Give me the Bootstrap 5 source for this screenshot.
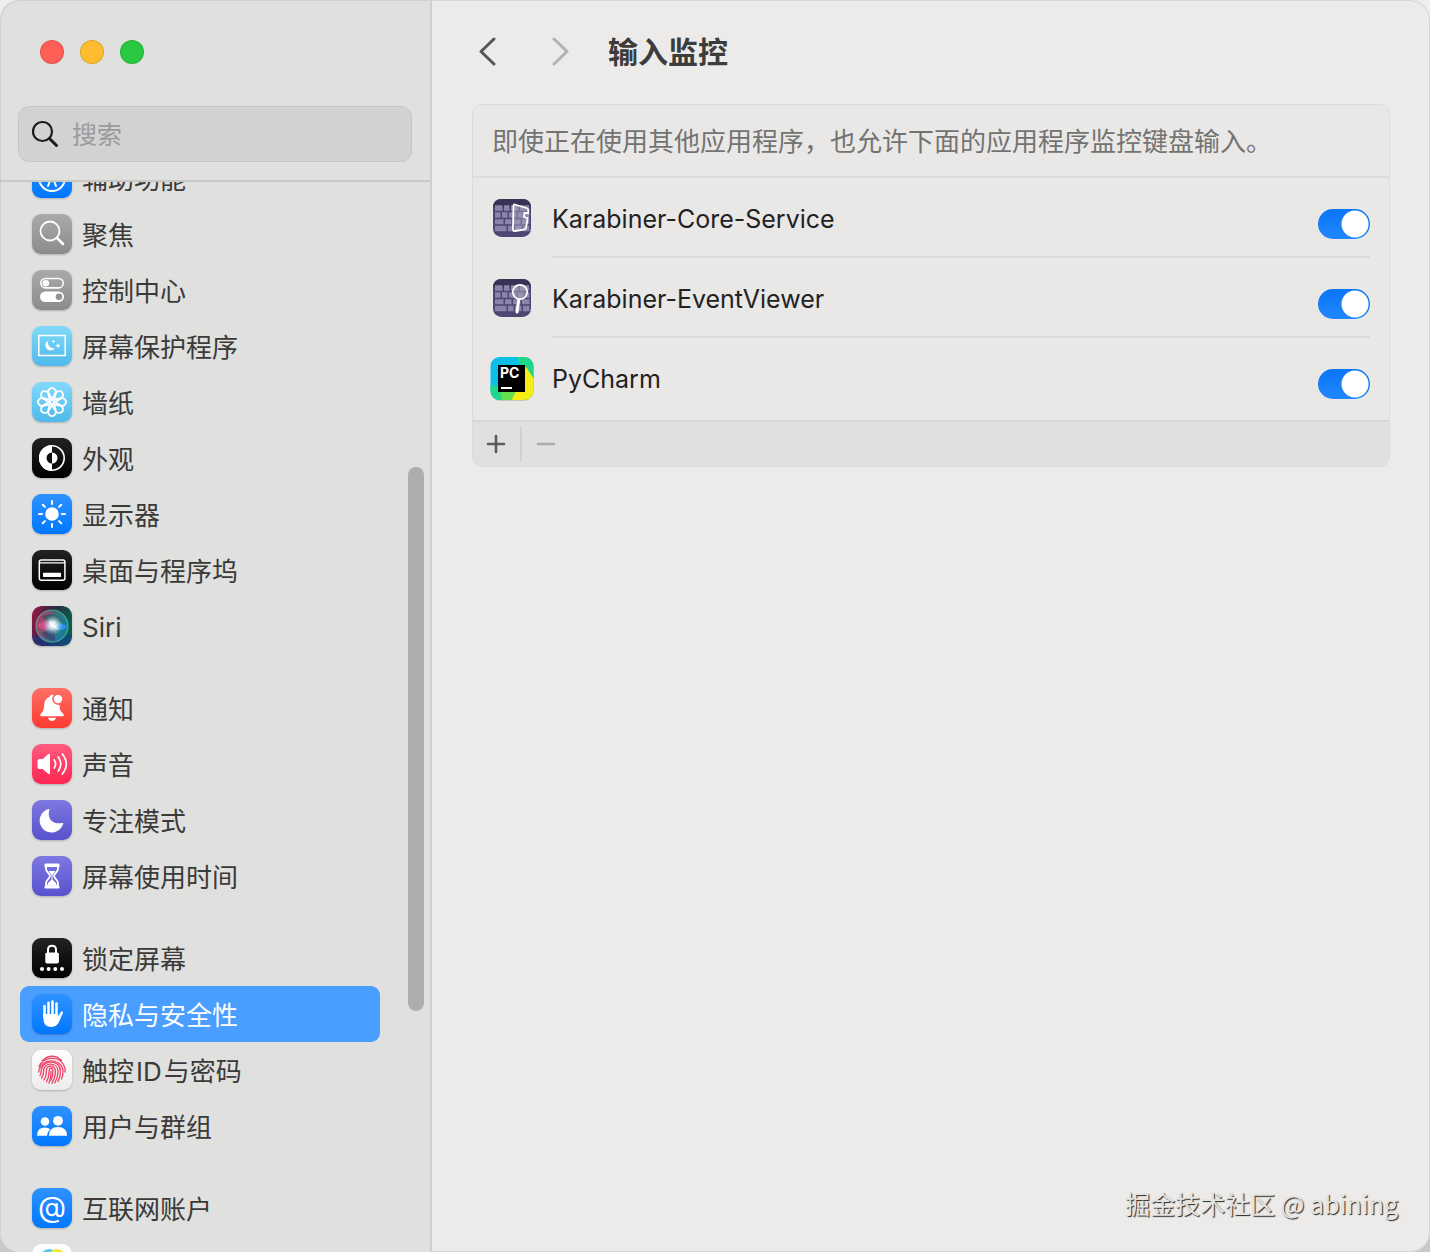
<!DOCTYPE html>
<html lang="zh-CN">
<head>
<meta charset="utf-8">
<meta name="viewport" content="width=device-width, initial-scale=1">
<title>输入监控</title>
<link href="https://cdn.jsdelivr.net/npm/bootstrap@5.3.0/dist/css/bootstrap.min.css" rel="stylesheet">
<style>
body{font-family:Inter,"Noto Sans CJK SC",sans-serif;font-size:26px;line-height:40px;background:linear-gradient(#eeeeee,#c8c8c8);color:#222}
.window{background:#ecebea;border-radius:20px;box-shadow:inset 0 0 0 1px #d6d6d5}
.sidebar{width:432px;background:#e0e0de;border-right:2px solid #cfcfcd;box-shadow:inset 1px 1px 0 #d0d0cf;border-radius:20px 0 0 20px;color:#3a3a39}
.side-top{padding:40px 18px 18px;border-bottom:2px solid #c8c8c6}
.lights{padding-left:22px;gap:16px;margin-bottom:42px}
.light{width:24px;height:24px;border-radius:50%;border:1px solid rgba(0,0,0,.12);padding:0}
.light-r{background:#ff5f57}.light-y{background:#febc2e}.light-g{background:#28c840}
.search{height:56px;background:#d2d2d2;border:1px solid #c6c6c6;border-radius:11px;padding-left:12px;gap:13px}
.search input,.search input:focus{font-size:25px;line-height:38px;background:transparent;border:0;padding:2px 0 0;box-shadow:none}
.search input::placeholder{color:#9b9b9b;opacity:1}
.side-list{margin-top:-32px;padding-left:20px;padding-right:50px}
.side-list .nav-link{height:56px;padding:4px 12px 0;gap:10px;border-radius:9px;color:inherit;white-space:nowrap}
.side-list .nav-link.active{background:#4a9eff;color:#fff}
.side-list ul+ul{margin-top:26px}
.tile{width:40px;height:40px;margin-top:-4px;border-radius:9px;box-shadow:0 1px 2px rgba(0,0,0,.22);flex:none}
.latin{padding:0 2px}
.t-blue{background:linear-gradient(#2f92ff,#0077ff)}
.t-gray{background:linear-gradient(#aaaaad,#8b8b8e)}
.t-sky{background:linear-gradient(#82daf9,#50b9ec)}
.t-black{background:linear-gradient(#222,#000)}
.t-red{background:linear-gradient(#ff6f66,#ff3a30)}
.t-pink{background:linear-gradient(#ff5c80,#ff2552)}
.t-purple{background:linear-gradient(#7d78e2,#5852ce)}
.t-white{background:linear-gradient(#fff,#ececec)}
.thumb{right:6px;top:285px;width:16px;height:544px;border-radius:8px;background:#adadac}
.content-area{padding:0 40px}
.title-row{height:104px}
.title-row h1{font-size:30px;line-height:40px;font-weight:700;color:#3c3c3b;margin:0}
.nav-pair{gap:48px;margin-right:24px}
.chev{width:32px;height:40px;padding:0;border:0;background:none;line-height:0}
.panel{background:#e9e8e7;border:1px solid #dbdbda;border-radius:10px;overflow:hidden}
.note{color:#737372;padding:17px 19px 14px;border-bottom:2px solid #dcdcdb}
.app-row{height:80px;padding:0 19px 0 17px;gap:18px}
.app-body{height:80px;border-bottom:2px solid #dcdcdb;min-width:0}
.app-row:last-child{height:82px}
.app-row:last-child .app-body{border-color:transparent}
.app-name{font-size:25px;padding-top:4px}
.form-switch.sw{padding:0;margin:14px 0 0;min-height:0;line-height:0}
.form-switch .form-check-input{float:none;margin:0;width:52px;height:30px;border:0;border-radius:15px;background:#bbb}
.form-switch .form-check-input:checked{background:radial-gradient(circle at 37px 15px,#fff 12px,#fff 13px,transparent 14px),linear-gradient(#0a75f5,#1f87ff)}
.tools{border-top:2px solid #d6d6d5;background:#e1e0df;height:46px}
.tools button{width:47px;height:34px;border:0;background:none;padding:0 2px 0 0;line-height:0}
.tools button+button{border-left:2px solid #d0d0cf;padding:0;width:50px}
.mark-text{right:32px;bottom:29px;font-family:"Noto Sans CJK SC",sans-serif;font-size:25px;color:#e4e4e3;text-shadow:1px 1px 1px #222;white-space:nowrap}
</style>
<script src="https://cdn.jsdelivr.net/npm/bootstrap@5.3.0/dist/js/bootstrap.bundle.min.js"></script>
</head>
<body>
<div class="window d-flex vh-100 overflow-hidden position-relative">
<aside class="sidebar d-flex flex-column flex-shrink-0">
  <div class="side-top">
    <div class="lights d-flex">
      <button class="light light-r" aria-label="关闭"></button><button class="light light-y" aria-label="最小化"></button><button class="light light-g" aria-label="缩放"></button>
    </div>
    <label class="search d-flex align-items-center">
      <svg class="flex-shrink-0" width="28" height="28" viewBox="0 0 28 28" fill="none" stroke="#1c1c1c" stroke-linecap="round"><circle cx="11.500" cy="11.500" r="9.500" stroke-width="2.200"/><path d="M18.500 18.500l7 7" stroke-width="3"/></svg>
      <input class="form-control" type="search" placeholder="搜索" aria-label="搜索">
    </label>
  </div>
  <nav class="flex-grow-1 overflow-hidden position-relative">
    <div class="side-list">
    <ul class="nav flex-column flex-nowrap">
      <li><a class="nav-link d-flex align-items-center" href="#"><svg class="tile t-blue" viewBox="0 0 40 40" fill="none" stroke="#fff" stroke-width="2" stroke-linecap="round"><circle cx="20" cy="20" r="13"/><circle cx="20" cy="12.500" r="1.500" fill="#fff" stroke="none"/><path d="M13 16.500l5 1.200h4l5-1.200M18 18v5l-2 5M22 18v5l2 5M18 23l2-1 2 1"/></svg>辅助功能</a></li>
      <li><a class="nav-link d-flex align-items-center" href="#"><svg class="tile t-gray" viewBox="0 0 40 40" fill="none" stroke="#fff" stroke-linecap="round"><circle cx="18" cy="17" r="9.500" stroke-width="1.800"/><path d="M25 24l6 6" stroke-width="2.600"/></svg>聚焦</a></li>
      <li><a class="nav-link d-flex align-items-center" href="#"><svg class="tile t-gray" viewBox="0 0 40 40"><rect x="8.800" y="8.500" width="22.400" height="9.400" rx="4.700" fill="none" stroke="#fff" stroke-width="1.600"/><circle cx="13.800" cy="13.200" r="3.300" fill="#fff"/><rect x="8" y="21.500" width="24" height="10.500" rx="5.250" fill="#fff"/><circle cx="27" cy="26.700" r="3.300" fill="#939396"/></svg>控制中心</a></li>
      <li><a class="nav-link d-flex align-items-center" href="#"><svg class="tile t-sky" viewBox="0 0 40 40"><rect x="6.800" y="9.500" width="26.400" height="20" fill="none" stroke="#fff" stroke-width="1.500"/><path d="M16.500 14.500a5.200 5.200 0 1 0 6.500 7.500a5.500 5.500 0 0 1-6.500-7.500z" fill="#fff"/><path d="M21.500 13.500l.6 1.400 1.400.6-1.400.6-.6 1.400-.6-1.400-1.400-.6 1.400-.6zM26 17l.8 2 2 .8-2 .8-.8 2-.8-2-2-.8 2-.8z" fill="#fff"/></svg>屏幕保护程序</a></li>
      <li><a class="nav-link d-flex align-items-center" href="#"><svg class="tile t-sky" viewBox="0 0 40 40" fill="none" stroke="#fff" stroke-width="1.800"><g id="petal"><path d="M20 17l-2.800-4.800a3.700 3.700 0 1 1 5.600 0z"/><path d="M20 23l2.800 4.800a3.700 3.700 0 1 1-5.600 0z"/></g><use href="#petal" transform="rotate(45 20 20)"/><use href="#petal" transform="rotate(90 20 20)"/><use href="#petal" transform="rotate(135 20 20)"/><circle cx="20" cy="20" r="2"/></svg>墙纸</a></li>
      <li><a class="nav-link d-flex align-items-center" href="#"><svg class="tile t-black" viewBox="0 0 40 40"><circle cx="20" cy="20" r="12.200" fill="none" stroke="#fff" stroke-width="1.600"/><path d="M20 7a13 13 0 0 0 0 26z" fill="#fff"/><path d="M20 14.500a5.500 5.500 0 0 0 0 11z" fill="#111"/><path d="M20 14.500a5.500 5.500 0 0 1 0 11z" fill="#fff"/></svg>外观</a></li>
      <li><a class="nav-link d-flex align-items-center" href="#"><svg class="tile t-blue" viewBox="0 0 40 40"><circle cx="20" cy="20" r="6.800" fill="#fff"/><path d="M20 7v3M20 30v3M7 20h3M30 20h3M10.800 10.800l2.100 2.100M27.100 27.100l2.100 2.100M10.800 29.200l2.100-2.100M27.100 12.900l2.100-2.100" stroke="#fff" stroke-width="2" stroke-linecap="round"/></svg>显示器</a></li>
      <li><a class="nav-link d-flex align-items-center" href="#"><svg class="tile t-black" viewBox="0 0 40 40"><rect x="7.300" y="10" width="25.600" height="20.200" rx="2" fill="none" stroke="#fff" stroke-width="1.500"/><path d="M7.500 12.800h25" stroke="#fff" stroke-width="1.300"/><rect x="11" y="22.800" width="18" height="4.200" rx=".6" fill="#fff"/></svg>桌面与程序坞</a></li>
      <li><a class="nav-link d-flex align-items-center" href="#"><svg class="tile" viewBox="0 0 40 40"><defs><linearGradient id="siriBg" x2="1" y2=".3"><stop stop-color="#a3174a"/><stop offset=".5" stop-color="#2b2740"/><stop offset="1" stop-color="#0a5f4c"/></linearGradient><linearGradient id="siriOrb" x2="1" y2=".3"><stop stop-color="#e8356f"/><stop offset=".4" stop-color="#a06a8a"/><stop offset=".6" stop-color="#3d8f90"/><stop offset="1" stop-color="#1b8fc0"/></linearGradient><radialGradient id="siriGlow"><stop stop-color="#fff"/><stop offset=".35" stop-color="#edfaff" stop-opacity=".85"/><stop offset="1" stop-color="#a9d8ff" stop-opacity="0"/></radialGradient></defs><rect width="40" height="40" rx="9" fill="url(#siriBg)"/><path d="M0 30q20 3 40-2v3q0 9-9 9H9q-9 0-9-9z" fill="#1b3a90" opacity=".6"/><circle cx="20" cy="20" r="16" fill="url(#siriOrb)" opacity=".7" stroke="#5bd2a8" stroke-width="1.200"/><path d="M9 11q12-7 22 4l-9 3z" fill="#1f5354" opacity=".6"/><path d="M9 27q6 8 14 8l-1-12z" fill="#3b3a6b" opacity=".65"/><path d="M5 20q5-9 15-1-6 9-15 1z" fill="#f2508c" opacity=".6"/><path d="M21 20q8-4 14 0-4 8-14 0z" fill="#2f96f5" opacity=".85"/><circle cx="21" cy="19" r="10" fill="url(#siriGlow)"/><path d="M17 14l10 10-8-4z" fill="#fff"/></svg>Siri</a></li>
    </ul>
    <ul class="nav flex-column flex-nowrap">
      <li><a class="nav-link d-flex align-items-center" href="#"><svg class="tile t-red" viewBox="0 0 40 40" fill="#fff"><path d="M20 6.800c1.500 0 2.300.6 2.500 1.500a5.800 5.800 0 0 0 5 8.400c.2 4 .7 6.300 3 8.300 1 1 1.500 1.600 1.200 2.400-.2.600-.8.800-1.500.8H9.800c-.7 0-1.300-.2-1.500-.8-.3-.8.2-1.400 1.200-2.400 2.500-2.500 2.300-5 2.800-9 .4-4 2.400-6.300 5.500-7.200.2-1.200.9-2 2.200-2z"/><circle cx="26" cy="11" r="5" stroke="#ff6057" stroke-width="1.600"/><path d="M16 29.800h8c-.4 2-2 3.200-4 3.200s-3.600-1.200-4-3.200z"/></svg>通知</a></li>
      <li><a class="nav-link d-flex align-items-center" href="#"><svg class="tile t-pink" viewBox="0 0 40 40"><path d="M5.500 17q0-2 2-2h3.300l5-4.500Q18 9 18 11v18q0 2-2.200.5l-5-4.500H7.500q-2 0-2-2z" fill="#fff"/><path d="M22.300 16q2.500 4 0 8M26.300 13q5 7 0 14M30.300 10q8 10 0 20" fill="none" stroke="#fff" stroke-width="1.700" stroke-linecap="round"/></svg>声音</a></li>
      <li><a class="nav-link d-flex align-items-center" href="#"><svg class="tile t-purple" viewBox="0 0 40 40"><path d="M16.500 9c.8-.3 1.200.2.900 1-2.700 8.500 3.300 15 12.800 13 .9-.2 1.300.4.900 1.100A12 12 0 1 1 16.500 9z" fill="#fff"/></svg>专注模式</a></li>
      <li><a class="nav-link d-flex align-items-center" href="#"><svg class="tile t-purple" viewBox="0 0 40 40"><path d="M14 9.500h12v3.500c0 3-4 4.500-4 7s4 4 4 7v3.500H14V27c0-3 4-4.500 4-7s-4-4-4-7z" fill="none" stroke="#fff" stroke-width="1.800"/><path d="M12.500 8.500q0-1 1-1h13q1 0 1 1v2q0 .5-1 .5h-13q-1 0-1-.5zM12.500 30.500q0-.8 1-.8h13q1 0 1 .8v1q0 1-1 1h-13q-1 0-1-1zM16.500 15h7l-3 4v4.500l4 4v2h-9v-2l4-4V19z" fill="#fff"/></svg>屏幕使用时间</a></li>
    </ul>
    <ul class="nav flex-column flex-nowrap">
      <li><a class="nav-link d-flex align-items-center" href="#"><svg class="tile t-black" viewBox="0 0 40 40" fill="#fff"><rect x="13.300" y="14.500" width="13.600" height="11" rx="1.800"/><path d="M16 15v-3.300q0-3.900 4-3.900t4 3.900V15" fill="none" stroke="#fff" stroke-width="2"/><circle cx="10" cy="31" r="2"/><circle cx="16.600" cy="31" r="2"/><circle cx="23.300" cy="31" r="2"/><circle cx="30" cy="31" r="2"/></svg>锁定屏幕</a></li>
      <li><a class="nav-link active d-flex align-items-center" href="#" aria-current="page"><svg class="tile t-blue" viewBox="0 0 40 40" fill="none" stroke="#fff" stroke-width="2.500" stroke-linecap="round"><path d="M12.500 12v11M16.500 8.800V21M20.500 7.500V21M24.500 9.500V22"/><path d="M11.300 20h14.500v2.500l2.900-4.200q1.200-1.500 2-.6.600.6.100 1.600l-3.500 8q-2.300 5.700-7.800 5.700-8.200 0-8.200-9z" fill="#fff" stroke="none"/></svg>隐私与安全性</a></li>
      <li><a class="nav-link d-flex align-items-center" href="#"><svg class="tile t-white" viewBox="0 0 40 40" fill="none" stroke="#f0436a" stroke-width="1.350" stroke-linecap="round"><path d="M10.500 10.500Q20 2 29.500 10.500"/><path d="M7 16.500C11 6 29 5 33 18v4"/><path d="M6.800 22C8 7.500 30 7 31 21q.2 4-1.500 8"/><path d="M8 25.500q1.200-2 1.200-5C10 9.500 28 9 28.500 21q.2 5-2.500 10.500"/><path d="M9.500 28q2.300-3 2.200-7.500C12 12 25.500 12 26 21q.2 6-3.200 12"/><path d="M12 30q2.600-4 2.400-9C14.500 14.500 23 14.500 23.400 21q.1 6.500-3.500 12.200"/><path d="M14.500 31.800q2.700-4.800 2.600-10.500c0-4.500 3.700-4.300 3.800 0q0 5.500-2 9"/><path d="M17 33q2.200-5 2-11.500"/></svg><span>触控<span class="latin">ID</span>与密码</span></a></li>
      <li><a class="nav-link d-flex align-items-center" href="#"><svg class="tile t-blue" viewBox="0 0 40 40" fill="#fff"><circle cx="13" cy="15.500" r="4.300"/><path d="M5 29.800q0-8.300 8-8.300 3.200 0 5.200 1.800-3 2.500-3.200 6.500z"/><circle cx="26" cy="14.800" r="4.900"/><path d="M16.800 29.800q.3-8.800 9.200-8.800t9.200 8.800z"/></svg>用户与群组</a></li>
    </ul>
    <ul class="nav flex-column flex-nowrap">
      <li><a class="nav-link d-flex align-items-center" href="#"><svg class="tile t-blue" viewBox="0 0 40 40"><text x="20" y="29" text-anchor="middle" font-family="Inter,sans-serif" font-size="29" fill="#fff">@</text></svg>互联网账户</a></li>
      <li><a class="nav-link d-flex align-items-center" href="#" aria-label="Game Center"><svg class="tile t-white" viewBox="0 0 40 40"><circle cx="17" cy="14" r="9" fill="#53ccef"/><circle cx="25" cy="14" r="9" fill="#f5e63b"/><circle cx="21" cy="25" r="9" fill="#f94b85"/></svg></a></li>
    </ul>
    </div>
    <div class="thumb position-absolute"></div>
  </nav>
</aside>
<main class="content-area flex-grow-1">
  <header class="title-row d-flex align-items-center">
    <div class="nav-pair d-flex">
    <button class="chev" aria-label="后退"><svg width="32" height="32" viewBox="0 0 32 32" fill="none" stroke="#555554" stroke-width="3" stroke-linecap="round" stroke-linejoin="round"><path d="M22 3L9 15.500 22 28"/></svg></button>
    <button class="chev" aria-label="前进" disabled><svg width="32" height="32" viewBox="0 0 32 32" fill="none" stroke="#b2b2b1" stroke-width="3" stroke-linecap="round" stroke-linejoin="round"><path d="M2 3l13 12.500L2 28"/></svg></button>
    </div>
    <h1>输入监控</h1>
  </header>
  <section class="panel">
    <div class="note">即使正在使用其他应用程序，也允许下面的应用程序监控键盘输入。</div>
    <div>
      <div class="app-row d-flex align-items-center">
        <svg class="flex-shrink-0" width="44" height="44" viewBox="0 0 44 44"><defs><g id="bricks"><rect x="3" y="3" width="38" height="38" rx="8.500" fill="#4d4672"/><path d="M11.500 3h21q8.500 0 8.500 8.500H3Q3 3 11.500 3z" fill="#393257"/><path d="M5 9.200h7.500v5.600H5zM14 9.200h5.500v5.600H14zM21 9.200h7.500v5.600H21zM30 9.200h9v5.600h-9zM5 16.200h5.500v5.600H5zM12 16.200h5.500v5.600H12zM19 16.200h7.500v5.600H19zM28 16.200h5.500v5.600H28zM35 16.200h4.500v5.600H35zM5 23.200h8.500v5H5zM15 23.200h6.500v5H15zM23 23.200h7.500v5H23zM32 23.200h7.500v5H32zM5 29.800h11.500v5.400H5zM18 29.800h5.500v5.400H18zM25 29.800h6.500v5.400H25zM33 29.800h6.500v5.400H33z" fill="#8984a8"/></g></defs><use href="#bricks"/><path d="M24.500 8.500l12 3.500q2 .6 1.900 2.500l-.4 3-3.500-.7-.5 4.400 3.700 1-1.600 9.300q-.4 1.800-2.300 2.200l-9 1.300q-2 .2-1.900-1.700l.6-23q0-2 1-1.800z" fill="#a9a4bd" fill-opacity=".45" stroke="#fff" stroke-width="1.800"/></svg>
        <div class="app-body d-flex align-items-center flex-grow-1"><label class="app-name flex-grow-1" for="s1">Karabiner-Core-Service</label><div class="form-check form-switch sw"><input class="form-check-input" type="checkbox" role="switch" id="s1" checked></div></div>
      </div>
      <div class="app-row d-flex align-items-center">
        <svg class="flex-shrink-0" width="44" height="44" viewBox="0 0 44 44"><use href="#bricks"/><circle cx="30" cy="16" r="7.200" fill="#aaa7bc" fill-opacity=".5" stroke="#fff" stroke-width="1.700"/><path d="M28.700 24L27 36" stroke="#fff" stroke-width="3" stroke-linecap="round"/></svg>
        <div class="app-body d-flex align-items-center flex-grow-1"><label class="app-name flex-grow-1" for="s2">Karabiner-EventViewer</label><div class="form-check form-switch sw"><input class="form-check-input" type="checkbox" role="switch" id="s2" checked></div></div>
      </div>
      <div class="app-row d-flex align-items-start">
        <svg class="flex-shrink-0 mt-3" width="44" height="48" viewBox="0 -3 44 48"><defs><clipPath id="pcClip"><rect x="0.500" width="43" height="43" rx="9"/></clipPath></defs><rect x="1" y="1.500" width="42" height="42.500" rx="9" fill="#c5c5c2"/><g clip-path="url(#pcClip)"><path d="M0 0h44v44H0z" fill="#0cbfe9"/><path d="M27 0h17v22L30 8zM0 28l12 2 12 14H0z" fill="#21d789"/><path d="M36 10l8 12v22H20l3-10z" fill="#f6ed16"/><path d="M10 33l16 1-5 10h-9z" fill="#65e04d"/></g><path d="M8 8h27v27H8z"/><text x="10" y="20.500" font-family="Inter,sans-serif" font-weight="700" font-size="14" fill="#fff">PC</text><path d="M11 30h11v2H11z" fill="#fff"/></svg>
        <div class="app-body d-flex align-items-center flex-grow-1"><label class="app-name flex-grow-1" for="s3">PyCharm</label><div class="form-check form-switch sw"><input class="form-check-input" type="checkbox" role="switch" id="s3" checked></div></div>
      </div>
    </div>
    <div class="tools d-flex align-items-center">
      <button aria-label="添加"><svg width="20" height="20" viewBox="0 0 20 20"><path d="M10 2v16M2 10h16" stroke="#5a5a59" stroke-width="2.600" stroke-linecap="round"/></svg></button>
      <button aria-label="移除" disabled><svg width="20" height="20" viewBox="0 0 20 20"><path d="M2 10h16" stroke="#acacab" stroke-width="2.600" stroke-linecap="round"/></svg></button>
    </div>
  </section>
</main>
<div class="mark-text position-absolute">掘金技术社区 @ abining</div>
</div>
</body>
</html>
